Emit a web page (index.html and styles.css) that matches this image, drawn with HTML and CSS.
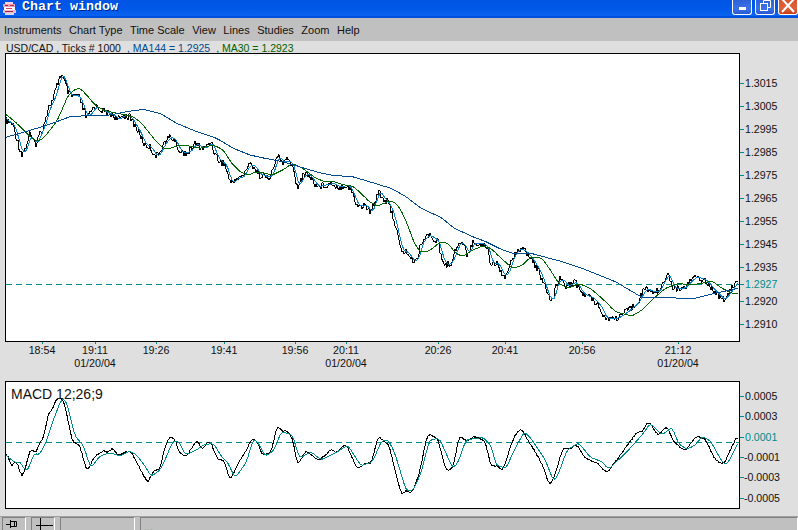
FILE: index.html
```html
<!DOCTYPE html>
<html lang="en">

<head>
    <meta charset="UTF-8">
    <title>Chart window</title>
    <link rel="stylesheet" href="styles.css">
</head>

<body>
    <div class="window">
        <div class="titlebar">
            <svg class="app-icon" width="15" height="15" viewBox="0 0 15 15">
                <rect x="3" y="1" width="8" height="2" fill="#f3d4e0"/>
                <rect x="1" y="3" width="12" height="3" fill="#e8a0b8"/>
                <rect x="3" y="4" width="3" height="1" fill="#b02040"/>
                <rect x="8" y="4" width="4" height="1" fill="#c03050"/>
                <rect x="2" y="6" width="11" height="3" fill="#fff"/>
                <rect x="4" y="7" width="6" height="1" fill="#d04068"/>
                <rect x="1" y="9" width="13" height="3" fill="#f0b8cc"/>
                <rect x="3" y="10" width="8" height="1" fill="#a02848"/>
                <rect x="3" y="12" width="9" height="2" fill="#d8d8e8"/>
            </svg>
            <span class="title">Chart window</span>
            <div class="caption-btns">
                <div class="caption-btn">
                    <svg width="18" height="14" viewBox="0 0 18 14"><rect x="6" y="7" width="7" height="3" fill="#fff"/></svg>
                </div>
                <div class="caption-btn">
                    <svg width="18" height="14" viewBox="0 0 18 14" fill="none" stroke="#fff"><path d="M7.5 3.5V0.5H14.5V7.5H11.5"/><rect x="4.5" y="3.5" width="7" height="7"/></svg>
                </div>
                <div class="caption-btn close">
                    <svg width="18" height="14" viewBox="0 0 18 14" fill="none" stroke="#fff" stroke-width="2"><path d="M3 -1L15 12M15 -1L3 12"/></svg>
                </div>
            </div>
        </div>

        <div class="menubar">
            <span>Instruments</span>
            <span>Chart Type</span>
            <span>Time Scale</span>
            <span>View</span>
            <span>Lines</span>
            <span>Studies</span>
            <span>Zoom</span>
            <span>Help</span>
        </div>

        <div class="legend">
            <span>USD/CAD , Ticks # 1000</span>
            <span class="ma144">, MA144 = 1.2925</span>
            <span class="ma30">, MA30 = 1.2923</span>
        </div>

        <svg class="pane" id="price" width="798" height="328" viewBox="0 53 798 328"></svg>
        <svg class="pane" id="macd" width="798" height="135" viewBox="0 381 798 135"></svg>

        <div class="statusbar">
            <div class="cell small">
                <svg width="22" height="13" viewBox="0 0 22 13" fill="none" stroke="#000"><path d="M3 6.5H7M7.5 2V10M8 3.5H13.5V8.5H8M11.5 3.5V8.5"/></svg>
            </div>
            <div class="cell small">
                <svg width="22" height="13" viewBox="0 0 22 13" fill="none" stroke="#000"><path d="M4 7.5H21M8.5 0V13"/></svg>
            </div>
            <div class="cell wide"></div>
            <div class="cell rest">...</div>
        </div>
    </div>
    <script src="chart.js"></script>
</body>

</html>
```

FILE: styles.css
```css
body {
    margin: 0;
    overflow: hidden;
    font-family: "Liberation Sans", Arial, sans-serif;
}

.window {
    width: 798px;
    height: 530px;
    overflow: hidden;
    display: flex;
    flex-direction: column;
    background-color: #dfdfdf;
}

.titlebar {
    height: 18px;
    flex: none;
    display: flex;
    align-items: flex-start;
    box-sizing: border-box;
    border-bottom: 2px solid #0050e0;
    background: linear-gradient(#0054e3, #0058e8 50%, #0a62f0);
}

.app-icon {
    margin: 1px 5px 0 2px;
}

.title {
    font-family: "Liberation Mono", monospace;
    font-weight: bold;
    font-size: 13.33px;
    line-height: 14px;
    color: #fff;
    text-shadow: 1px 1px 0 #00208c;
}

.caption-btns {
    margin-left: auto;
    display: flex;
    gap: 3px;
}

.caption-btn {
    width: 20px;
    height: 15px;
    box-sizing: border-box;
    border: 1px solid #fff;
    border-top: 0;
    border-radius: 0 0 3px 3px;
    background: linear-gradient(#2f62d8, #3c72e8 60%, #2a58d0);
    overflow: hidden;
}

.caption-btn svg {
    display: block;
}

.close {
    background: linear-gradient(#d8542c, #e0623a 60%, #c83c18);
}

.menubar {
    height: 23px;
    flex: none;
    display: flex;
    align-items: center;
    gap: 7.5px;
    padding-left: 4px;
    box-sizing: border-box;
    background-color: #c0c0c0;
    font-size: 11px;
    color: #111;
}

.legend {
    height: 12px;
    flex: none;
    overflow: hidden;
    display: flex;
    gap: 6px;
    padding-left: 6px;
    font-size: 10.5px;
    line-height: 15px;
    color: #111;
}

.ma144 {
    color: #004a90;
}

.ma30 {
    color: #006400;
}

.pane {
    display: block;
    flex: none;
}

.statusbar {
    flex: 1;
    display: flex;
    gap: 5px;
    padding-left: 2px;
    border-top: 1px solid #a0a0a0;
    background-color: #c0c0c0;
}

.cell {
    box-sizing: border-box;
    border-top: 1px solid #808080;
    border-left: 1px solid #808080;
    border-right: 1px solid #fff;
    font-size: 11px;
    line-height: 18px;
    overflow: hidden;
}

.cell svg {
    display: block;
}

.small {
    width: 24px;
}

.wide {
    width: 75px;
}

.rest {
    flex: 1;
    padding-left: 3px;
}
```

FILE: chart.js
```js
// points were read off the screen in 3x crops, so each run carries its crop origin
function trace(ox, oy, pts) {
    var out = []
    for (var i = 0; i < pts.length; i += 2) {
        out.push([ox + pts[i] / 3, oy + pts[i + 1] / 3])
    }
    return out
}

var priceBlue = trace(0, 0, [18,355,30,365,45,375,55,410,65,445,72,462,85,440,95,400,105,425,115,430,125,400,135,385,145,345,155,315,165,300,175,265,185,230,192,225,200,245,210,275,220,290,235,285,245,295,255,325,265,350,275,345,285,325,295,320,310,330,330,340,345,345,360,360,375,345,395,350,410,375,425,400,440,435,455,440,470,465,480,468,495,435,515,410,530,420,545,455,560,458,575,455,590,430,605,440,620,445,640,425,650,460,665,485,680,490,690,525,700,552,715,535,735,530,745,505,760,490,775,510,785,525,797,525])
    .concat(trace(266, 100, [10,235,25,220,35,180,45,168,55,190,70,180,85,195,95,245,102,258,115,230,130,220,145,240,160,260,180,255,205,250,225,262,245,255,260,265,275,310,290,320,305,315,320,340,330,310,345,268,355,295,370,305,385,340,400,400,410,450,430,458,445,482,460,480,470,430,490,405,510,415,525,430,530,470,545,495,560,490,570,465,585,425,600,435,610,465,625,430,650,430,670,440,680,490,700,490,720,530,735,510,745,470,765,445,785,455,795,470]))
    .concat(trace(532, 220, [0,110,25,150,45,200,55,235,70,240,78,190,95,175,110,200,135,185,160,225,185,232,210,260,225,295,260,295,290,275,320,250,345,205,365,215,385,215,412,160,430,205,460,205,495,170,525,180,550,210,580,240,600,215,620,185]))

var ma30 = trace(0, 0, [20,345,45,365,65,385,85,405,110,425,130,415,150,390,170,365,190,320,205,285,225,268,240,265,260,285,285,315,310,330,340,338,370,343,400,350,425,370,445,395,465,420,490,445,510,445,540,435,570,438,600,445,640,435,670,450,695,490,720,515,745,525,770,515,795,520])
    .concat(trace(266, 100, [20,225,50,210,80,190,110,205,145,232,175,245,205,245,235,255,260,258,285,280,310,305,335,318,365,305,385,305,405,330,425,375,445,430,465,458,490,452,525,425,545,430,570,460,590,470,620,450,650,438,675,445,700,470,740,505,770,495,795,470]))
    .concat(trace(532, 220, [30,115,55,150,80,190,110,205,140,190,175,205,210,235,250,275,300,288,330,270,365,235,400,205,440,190,470,195,510,190,540,183,570,205,600,220,620,222]))

var ma144 = trace(0, 0, [17,412,60,400,110,385,170,365,210,350,260,347,330,345,380,335,430,328,480,340,530,370,590,395,650,415,700,445,750,465,795,475])
    .concat(trace(266, 100, [50,185,100,200,160,218,200,226,260,230,310,245,375,265,420,290,465,325,525,352,565,385,620,410,660,425,710,450,740,460,795,460]))
    .concat(trace(532, 220, [90,125,150,145,250,185,330,232,490,235,540,222,620,205]))

var macdBlack = trace(0, 330, [17,375,30,372,40,420,50,390,58,395,70,445,80,425,90,380,100,352,110,375,125,340,140,315,150,250,165,238,175,205,195,205,210,270,222,335,245,345,268,430,285,385,300,372,320,360,330,370,345,350,360,380,380,365,400,365,420,405,450,460,465,420,485,422,500,350,518,318,530,325,545,370,565,380,590,340,600,330,610,362,635,330,660,390,680,390,695,455,720,400,740,370,765,320,780,340,795,380])
    .concat(trace(266, 330, [25,362,35,295,47,290,55,310,62,298,85,320,100,408,125,362,165,392,205,355,215,370,245,340,280,418,310,395,320,408,342,318,375,345,412,498,425,480,443,492,465,435,490,312,520,322,548,428,570,405,585,312,605,335,635,318,665,335,680,410,700,405,715,425,750,320,770,293,795,335]))
    .concat(trace(532, 370, [25,262,45,300,55,348,70,330,100,230,120,238,140,222,165,265,205,280,230,310,290,230,325,180,335,190,355,152,385,198,410,165,430,215,465,243,500,198,525,205,555,268,580,285,620,200]))

var macdTeal = trace(0, 330, [17,375,45,398,60,395,80,428,105,365,115,378,135,345,160,270,185,205,200,215,225,320,250,345,272,415,300,378,330,368,360,378,390,363,410,375,440,415,452,440,480,420,495,390,520,330,540,340,555,375,590,360,610,345,640,340,665,380,685,400,705,445,740,395,760,325,780,345,795,380])
    .concat(trace(266, 330, [25,360,45,305,80,315,100,385,135,365,165,390,210,368,245,345,285,408,320,395,345,335,365,328,385,365,420,480,440,483,465,430,490,330,520,325,560,415,575,400,600,330,650,322,675,345,690,405,720,415,745,360,775,305,795,325]))
    .concat(trace(532, 370, [40,270,65,335,80,310,105,240,140,218,175,262,210,275,230,298,285,245,330,195,355,160,390,195,420,172,440,222,465,238,490,225,510,200,535,212,570,275,585,285,620,215]))

var TEAL = "#008c8c"
var FONT = "Liberation Sans"
var NS = "http://www.w3.org/2000/svg"

function add(svg, tag, attrs, text) {
    var el = document.createElementNS(NS, tag)
    for (var k in attrs) el.setAttribute(k, attrs[k])
    if (text) el.textContent = text
    svg.appendChild(el)
    return el
}

function line(svg, pts, color, width) {
    add(svg, "polyline", {
        points: pts.map(function (p) { return p[0].toFixed(1) + "," + p[1].toFixed(1) }).join(" "),
        fill: "none", stroke: color, "stroke-width": width, "shape-rendering": "crispEdges"
    })
}

function yAt(pts, x) {
    for (var i = 1; i < pts.length; i++) {
        if (x <= pts[i][0]) {
            var t = (x - pts[i - 1][0]) / (pts[i][0] - pts[i - 1][0])
            return pts[i - 1][1] + t * (pts[i][1] - pts[i - 1][1])
        }
    }
    return pts[pts.length - 1][1]
}

function rand(i) {
    var n = Math.sin(i * 12.9898) * 43758.5453
    return n - Math.floor(n) - 0.5
}

// resample every 2px and soften the corners left by the hand-read points
function smooth(pts) {
    var out = []
    for (var x = 6; x <= 739; x += 2) {
        var y = (yAt(pts, x - 2) + 2 * yAt(pts, x) + yAt(pts, x + 2)) / 4
        out.push([x, y])
    }
    return out
}

// the tick line runs just ahead of its smoothed copy, with some noise on top
function ticks(pts, spread) {
    var out = []
    for (var x = 6, i = 0; x < 739; x += 1, i++) {
        out.push([x, yAt(pts, x + 2) + rand(i) * spread])
    }
    return out
}

function frame(svg, top, bottom, dashY) {
    add(svg, "rect", { x: 5.5, y: top + .5, width: 734, height: bottom - top, fill: "#fff", stroke: "#000", "shape-rendering": "crispEdges" })
    add(svg, "line", { x1: 6, x2: 739, y1: dashY + .5, y2: dashY + .5, stroke: TEAL, "stroke-dasharray": "6 4", "shape-rendering": "crispEdges" })
}

function scale(svg, rows) {
    rows.forEach(function (r) {
        var x = r[0].charAt(0) == "-" ? 744 : 745
        add(svg, "line", { x1: 740, x2: 744, y1: r[1] + .5, y2: r[1] + .5, stroke: TEAL, "shape-rendering": "crispEdges" })
        add(svg, "text", { x: x, y: r[1] + 4, fill: r[2] ? TEAL : "#111", "font-size": 10.6, "font-family": FONT }, r[0])
    })
}

var price = document.getElementById("price")
frame(price, 53, 341, 284)
line(price, ticks(priceBlue, 7), "#000", 1)
line(price, smooth(priceBlue), "#0a84c8", 1)
line(price, smooth(ma30), "#006400", 1)
line(price, smooth(ma144), "#004a90", 1)
scale(price, [
    ["1.3015", 83], ["1.3005", 106], ["1.2995", 129], ["1.2985", 152], ["1.2975", 175],
    ["1.2965", 198], ["1.2955", 221], ["1.2945", 244], ["1.2935", 267], ["1.2927", 284, true],
    ["1.2920", 301], ["1.2910", 324]
])

var times = [
    ["18:54", 42], ["19:11", 95, 1], ["19:26", 156], ["19:41", 224], ["19:56", 295],
    ["20:11", 346, 1], ["20:26", 438], ["20:41", 505], ["20:56", 582], ["21:12", 678, 1]
]
times.forEach(function (t) {
    var style = { "text-anchor": "middle", "font-size": 10.7, "font-family": FONT, fill: "#111", x: t[1] }
    add(price, "line", { x1: t[1] + .5, x2: t[1] + .5, y1: 342, y2: 344, stroke: TEAL, "shape-rendering": "crispEdges" })
    style.y = 354
    add(price, "text", style, t[0])
    if (t[2]) {
        style.y = 367
        add(price, "text", style, "01/20/04")
    }
})

var macd = document.getElementById("macd")
frame(macd, 381, 508, 442)
line(macd, ticks(smooth(macdBlack), 1.2), "#000", 1)
line(macd, smooth(macdTeal), TEAL, 1)
add(macd, "text", { x: 11, y: 399, "font-size": 14, "font-family": FONT, fill: "#111" }, "MACD 12;26;9")
scale(macd, [
    ["0.0005", 396], ["0.0003", 416], ["0.0001", 437, true],
    ["-0.0001", 457], ["-0.0003", 477], ["-0.0005", 498]
])
```
